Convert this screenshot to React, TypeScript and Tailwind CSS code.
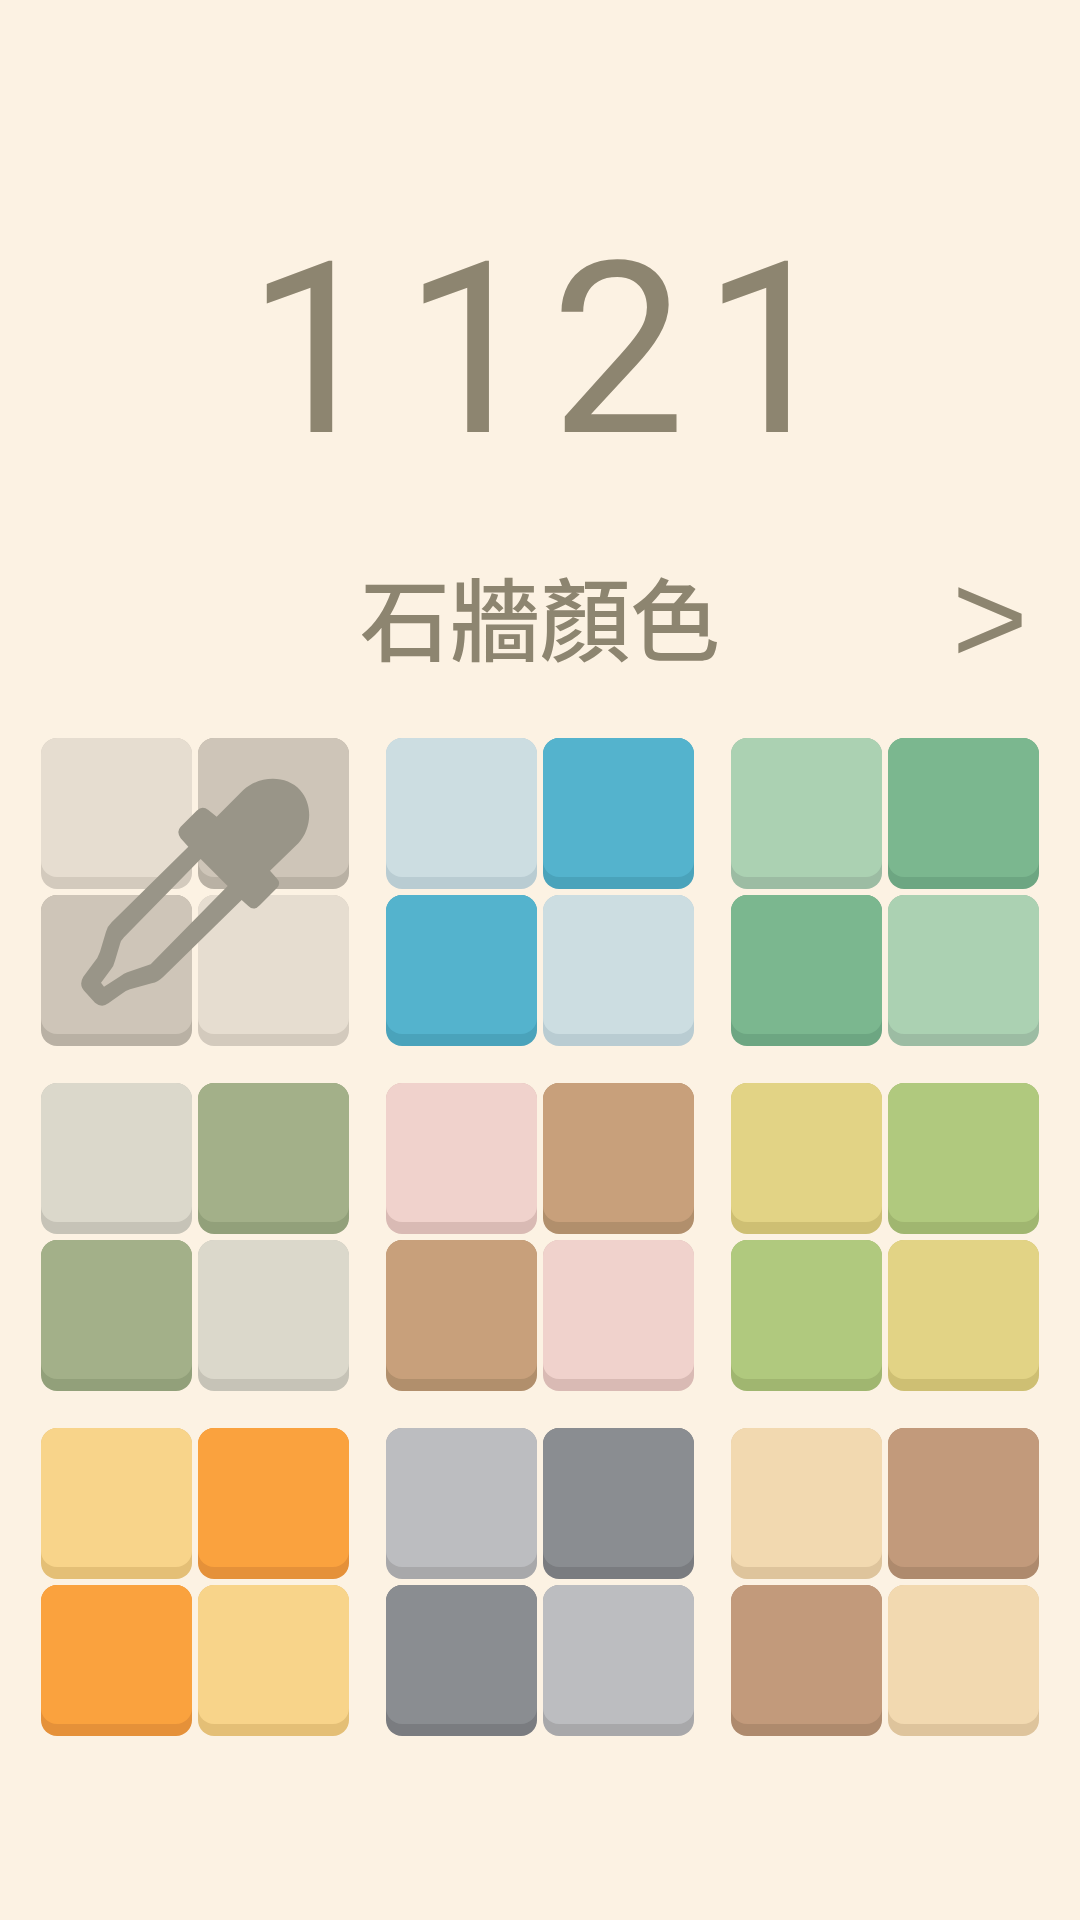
import React from "react";

type Tile = { face: string; edge: string };

const g = (face: string, edge: string): Tile => ({ face, edge });

// each group is a 2x2 checker of two colours
const groups: [Tile, Tile][] = [
  [g("bg-[#e6ddd0]", "bg-[#d3cabd]"), g("bg-[#cec5b8]", "bg-[#b9b1a4]")],
  [g("bg-[#ccdde1]", "bg-[#b9ccd2]"), g("bg-[#54b3cd]", "bg-[#4aa3bb]")],
  [g("bg-[#abd1b2]", "bg-[#9cbca3]"), g("bg-[#7bb78f]", "bg-[#6da682]")],
  [g("bg-[#dbd8cb]", "bg-[#c6c3b7]"), g("bg-[#a3b089]", "bg-[#92a07a]")],
  [g("bg-[#f0d2cc]", "bg-[#d9bab4]"), g("bg-[#c8a07b]", "bg-[#b18f6c]")],
  [g("bg-[#e2d385]", "bg-[#cebf73]"), g("bg-[#b0c97e]", "bg-[#a0b670]")],
  [g("bg-[#f8d48a]", "bg-[#e4bf76]"), g("bg-[#faa23e]", "bg-[#e59139]")],
  [g("bg-[#bcbdc0]", "bg-[#a8a8aa]"), g("bg-[#8a8d91]", "bg-[#7a7c80]")],
  [g("bg-[#f2d9b0]", "bg-[#dec49c]"), g("bg-[#c29a7b]", "bg-[#ae8a6d]")],
];

function TileBox({ tile }: { tile: Tile }) {
  return (
    <div className={`h-[151px] w-[151px] rounded-[16px] ${tile.edge}`}>
      <div className={`h-[139px] w-[151px] rounded-[16px] ${tile.face}`} />
    </div>
  );
}

function Dropper() {
  return (
    <svg
      className="absolute left-[-11px] top-[-18px] h-[340px] w-[340px]"
      viewBox="0 0 1020 1020"
    >
      <path
        fill="#999588"
        fillRule="evenodd"
        d="M640 210C690 165 770 165 810 210C850 255 845 325 805 370L720 452L740 475Q755 490 740 505L690 555Q672 575 655 558L635 540L400 770Q385 785 365 790L300 808Q285 812 270 825L235 850Q215 865 195 848L165 815Q145 795 160 770L190 730Q205 712 210 695L228 635Q232 620 245 607L475 380L452 355Q438 335 452 320L500 272Q517 255 535 270L560 290ZM512 417L593 498L362 733L292 757Q282 761 272 768L222 800L213 788L243 748Q251 738 255 722L270 672Q272 662 282 652Z"
      />
    </svg>
  );
}

export default function App() {
  return (
    <div className="flex h-[1920px] w-[1080px] flex-col bg-[#fcf2e3] font-['Liberation_Sans','Noto_Sans_CJK_TC',sans-serif] text-[#8d8570]">
      <div className="mt-[220px] pl-[26px] text-center font-['Roboto',sans-serif] text-[240px] font-[450] leading-[260px] tracking-[22px]">
        1<span className="tracking-[12px]">1</span>
        <span className="tracking-[17px]">2</span>1
      </div>
      <div className="mt-[83px] grid h-[120px] grid-cols-[1fr_auto_1fr] items-center">
        <div />
        <div className="text-[90px] font-medium leading-[120px]">石牆顏色</div>
        <div className="flex justify-end pb-[10px] pr-[52px] text-[130px] leading-[108px]">
          &gt;
        </div>
      </div>
      <div className="ml-[41px] mt-[55px] grid grid-cols-[repeat(3,308px)] gap-x-[37px] gap-y-[37px]">
        {groups.map((pair, i) => (
          <div key={i} className="relative grid grid-cols-[151px_151px] gap-[6px]">
            <TileBox tile={pair[0]} />
            <TileBox tile={pair[1]} />
            <TileBox tile={pair[1]} />
            <TileBox tile={pair[0]} />
            {i === 0 && <Dropper />}
          </div>
        ))}
      </div>
    </div>
  );
}
